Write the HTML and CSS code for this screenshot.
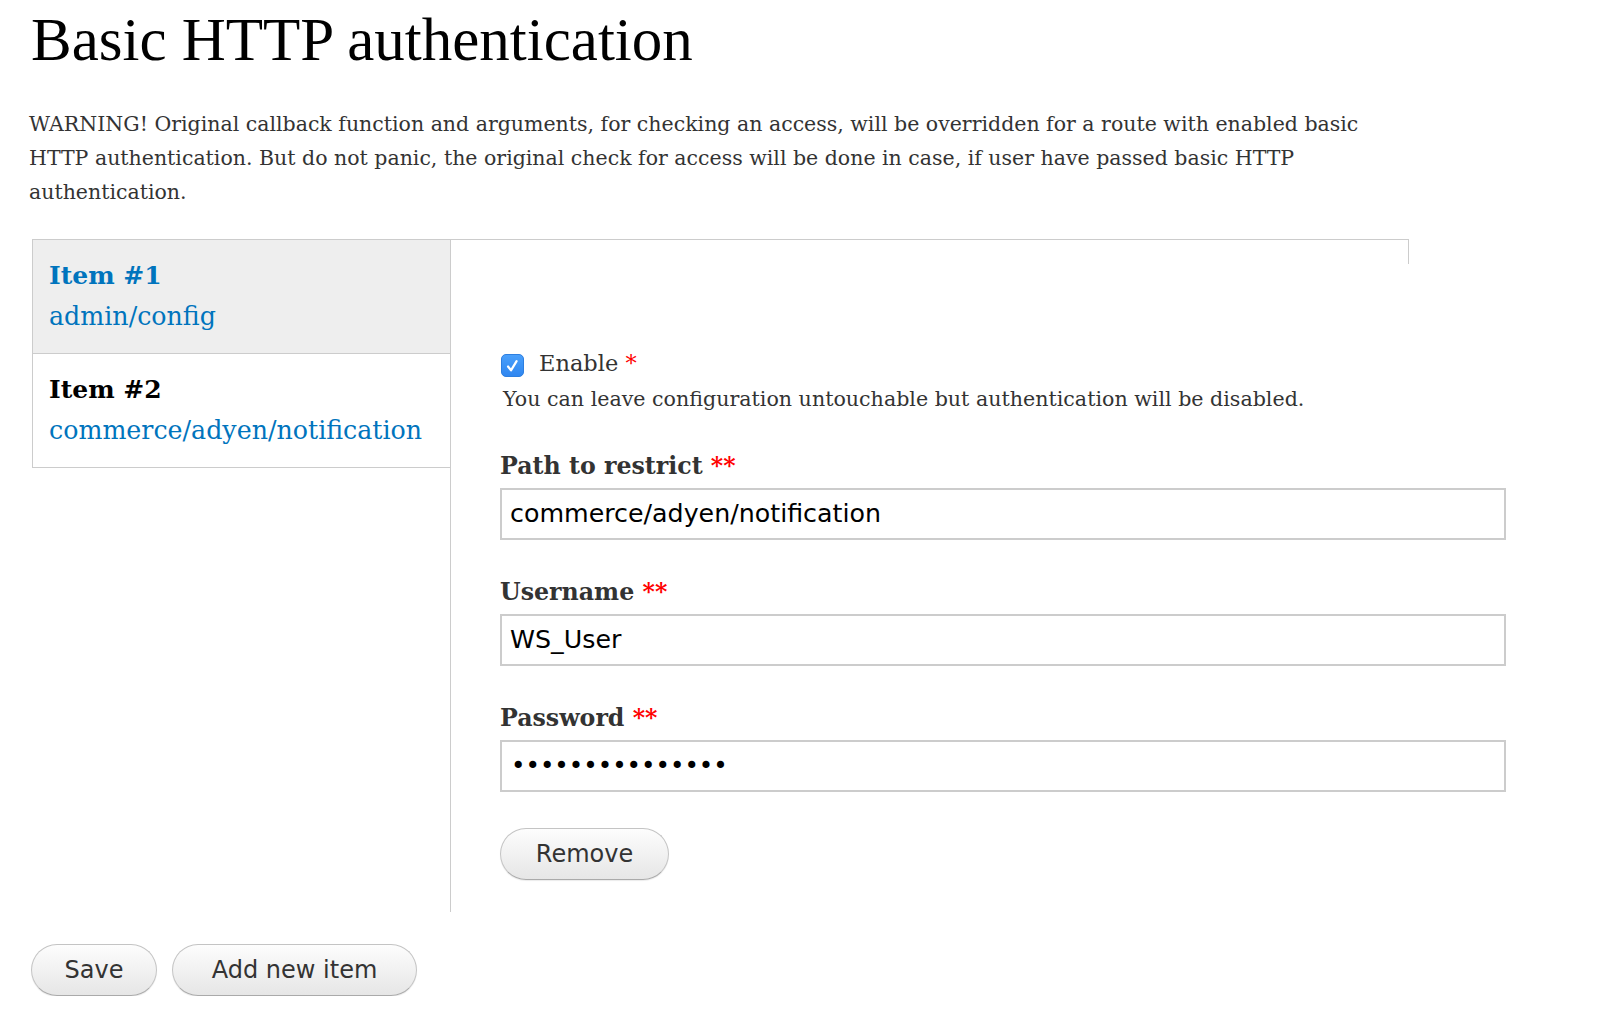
FILE: index.html
```html
<!DOCTYPE html>
<html>
<head>
<meta charset="utf-8">
<link rel="stylesheet" href="styles.css">
</head>
<body>
<div class="page">
  <h1 class="page-title">Basic HTTP authentication</h1>
  <p class="intro">WARNING! Original callback function and arguments, for checking an access, will be overridden for a route with enabled basic HTTP authentication. But do not panic, the original check for access will be done in case, if user have passed basic HTTP authentication.</p>

  <div class="vtabs">
    <ul class="vtabs-list">
      <li class="vtab is-selected">
        <a class="vtab-link" href="#">
          <strong class="vtab-title">Item #1</strong>
          <span class="vtab-summary">admin/config</span>
        </a>
      </li>
      <li class="vtab">
        <a class="vtab-link" href="#">
          <strong class="vtab-title">Item #2</strong>
          <span class="vtab-summary">commerce/adyen/notification</span>
        </a>
      </li>
    </ul>
    <div class="vtabs-pane">
      <div class="check-row">
        <span class="checkbox">
          <svg width="23" height="23" viewBox="0 0 23 23"><defs><linearGradient id="cb" x1="0" y1="0" x2="0" y2="1"><stop offset="0" stop-color="#4aa0fb"/><stop offset="1" stop-color="#2f86f0"/></linearGradient></defs><rect x="0.5" y="0.5" width="22" height="22" rx="4.5" fill="url(#cb)" stroke="#2d7fe0"/><path d="M7 12.5 L10 16.3 L15.6 7.2" fill="none" stroke="#fff" stroke-width="2.2" stroke-linecap="round" stroke-linejoin="round"/></svg>
        </span>
        <label class="check-label">Enable <span class="req">*</span></label>
      </div>
      <div class="description">You can leave configuration untouchable but authentication will be disabled.</div>

      <div class="form-item">
        <label class="field-label">Path to restrict <span class="req">**</span></label>
        <div class="text-input">commerce/adyen/notification</div>
      </div>
      <div class="form-item">
        <label class="field-label">Username <span class="req">**</span></label>
        <div class="text-input">WS_User</div>
      </div>
      <div class="form-item">
        <label class="field-label">Password <span class="req">**</span></label>
        <div class="text-input dots">•••••••••••••••</div>
      </div>
      <div class="pane-actions">
        <button class="btn btn-remove">Remove</button>
      </div>
    </div>
  </div>

  <div class="form-actions">
    <button class="btn btn-save">Save</button>
    <button class="btn btn-add">Add new item</button>
  </div>
</div>
</body>
</html>
```

FILE: styles.css
```css
html, body {
  margin: 0;
  padding: 0;
  background: #fff;
}
body {
  font-family: "DejaVu Serif", "Liberation Serif", serif;
  color: #333;
}
.page {
  padding-left: 31px;
}
.page-title {
  margin: 0;
  font-family: "Liberation Serif", serif;
  font-weight: normal;
  font-size: 61px;
  line-height: 80px;
  color: #000;
}
.intro {
  margin: 27px 0 0 -2px;
  width: 1345px;
  font-size: 20.5px;
  line-height: 34px;
  color: #333;
}
.vtabs {
  position: relative;
  margin-top: 30px;
  margin-left: 1px;
  width: 1377px;
  border-top: 1px solid #ccc;
  display: flex;
}
.vtabs::after {
  content: "";
  position: absolute;
  right: 0;
  top: 0;
  width: 1px;
  height: 24px;
  background: #ccc;
}
.vtabs-list {
  list-style: none;
  margin: 0;
  padding: 0;
  width: 418px;
  flex: none;
  border-right: 1px solid #ccc;
}
.vtab {
  border-left: 1px solid #ccc;
  border-bottom: 1px solid #ccc;
  background: #fff;
}
.vtab.is-selected {
  background: #eee;
}
.vtab-link {
  display: flex;
  flex-direction: column;
  gap: 5px;
  padding: 18px 16px 18px 16px;
  text-decoration: none;
}
.vtab-title {
  font-size: 25px;
  line-height: 36px;
  font-weight: bold;
  color: #000;
}
.is-selected .vtab-title {
  color: #0074bd;
}
.vtab-summary {
  font-size: 25.3px;
  line-height: 36px;
  color: #0074bd;
}
.vtabs-pane {
  flex: none;
  width: 1006px;
  padding: 108px 0 32px 49px;
}
.check-row {
  display: flex;
  align-items: center;
  height: 30px;
}
.checkbox {
  display: flex;
  width: 23px;
  height: 23px;
  margin-left: 1px;
  margin-top: 5px;
}
.check-label {
  margin-left: 15px;
  font-size: 22.5px;
  line-height: 30px;
  color: #333;
}
.req {
  color: #f00;
}
.description {
  margin-top: 6px;
  margin-left: 3px;
  font-size: 20.6px;
  line-height: 30px;
  color: #333;
}
.form-item {
  margin-top: 37px;
}
.form-item + .form-item {
  margin-top: 37px;
}
.field-label {
  display: block;
  font-size: 23.7px;
  line-height: 30px;
  font-weight: bold;
  color: #333;
  margin-bottom: 7px;
}
.text-input {
  box-sizing: border-box;
  width: 1006px;
  height: 52px;
  border: 2px solid #ccc;
  padding: 0 8px;
  font-family: "DejaVu Sans", "Open Sans", sans-serif;
  font-size: 25.3px;
  line-height: 48px;
  color: #000;
}
.text-input.dots {
  font-size: 24.5px;
  padding-left: 9px;
}
.pane-actions {
  margin-top: 36px;
}
.btn {
  box-sizing: border-box;
  height: 52px;
  padding: 0;
  border: 1px solid #c4c4c4;
  border-bottom-color: #aaa;
  border-radius: 26px;
  background: linear-gradient(#fdfdfd, #e6e6e6);
  font-family: "DejaVu Sans", "Open Sans", sans-serif;
  font-size: 24px;
  color: #333;
  box-shadow: 0 1px 1px rgba(0,0,0,0.08);
}
.form-actions {
  display: flex;
  gap: 15px;
  margin-top: 32px;
}
.btn-save {
  width: 126px;
}
.btn-add {
  width: 245px;
}
.btn-remove {
  width: 169px;
}
```
